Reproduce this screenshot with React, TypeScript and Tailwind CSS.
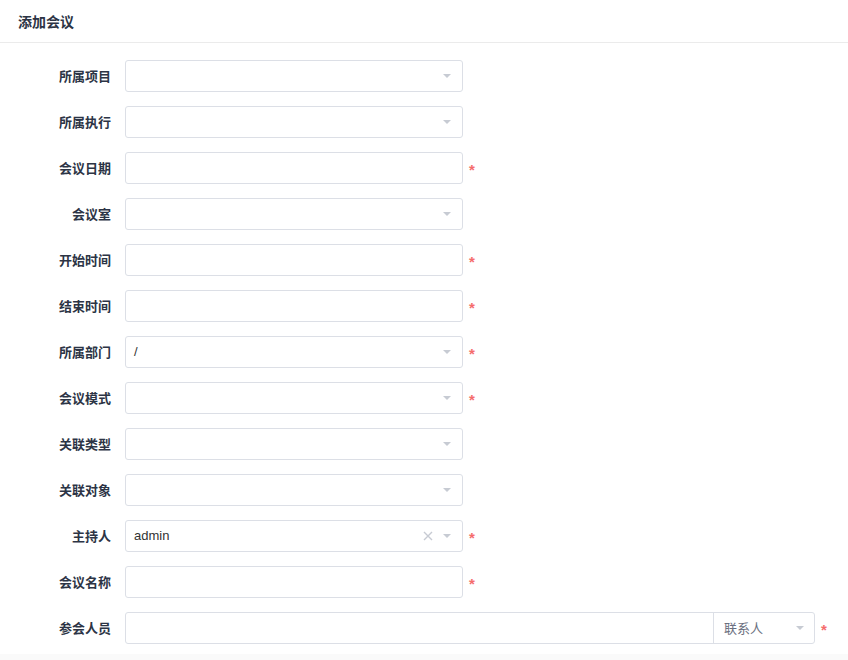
import type { ReactNode } from "react";

type Field = {
  label: string;
  kind: "select" | "input";
  value?: string;
  required?: boolean;
  clearable?: boolean;
};

const fields: Field[] = [
  { label: "所属项目", kind: "select" },
  { label: "所属执行", kind: "select" },
  { label: "会议日期", kind: "input", required: true },
  { label: "会议室", kind: "select" },
  { label: "开始时间", kind: "input", required: true },
  { label: "结束时间", kind: "input", required: true },
  { label: "所属部门", kind: "select", value: "/", required: true },
  { label: "会议模式", kind: "select", required: true },
  { label: "关联类型", kind: "select" },
  { label: "关联对象", kind: "select" },
  { label: "主持人", kind: "select", value: "admin", required: true, clearable: true },
  { label: "会议名称", kind: "input", required: true },
];

function Caret() {
  return (
    <svg width="8" height="4" viewBox="0 0 8 4" className="shrink-0">
      <path d="M0 0h8L4 4z" fill="#c7cbd3" />
    </svg>
  );
}

function ClearIcon() {
  return (
    <svg width="10" height="10" viewBox="0 0 10 10" className="shrink-0">
      <path d="M1 1l8 8M9 1l-8 8" stroke="#c7cbd3" strokeWidth="1.4" />
    </svg>
  );
}

function Star({ show }: { show?: boolean }) {
  return (
    <span
      className={`w-[16px] pl-[6px] pt-[3px] font-['Liberation_Sans',sans-serif] text-[15px] font-bold leading-none text-[#f56c6c] ${show ? "" : "invisible"}`}
    >
      *
    </span>
  );
}

function Row({ label, children }: { label: string; children: ReactNode }) {
  return (
    <div className="flex items-center">
      <label className="w-[125px] shrink-0 pr-[14px] text-right text-[13px] font-semibold text-[#2c3445]">
        {label}
      </label>
      {children}
    </div>
  );
}

export default function App() {
  return (
    <div className="flex h-[660px] w-[848px] flex-col bg-white font-['Noto_Sans_CJK_SC','Noto_Sans',sans-serif]">
      {/* Title bar */}
      <div className="flex h-[43px] shrink-0 items-center border-b border-[#ebebeb] px-[18px]">
        <h1 className="text-[14px] font-semibold text-[#2c3445]">添加会议</h1>
      </div>

      <div className="flex flex-col gap-[14px] pt-[17px]">
        {fields.map((f) => (
          <Row key={f.label} label={f.label}>
            <div className="flex h-[32px] w-[338px] items-center rounded-[3px] border border-[#dcdfe6] pl-[8px] pr-[11px] font-['Liberation_Sans','Noto_Sans_CJK_SC',sans-serif] text-[13px] text-[#333]">
              <span className="flex-1">{f.value}</span>
              {f.clearable && (
                <span className="mr-[10px] flex">
                  <ClearIcon />
                </span>
              )}
              {f.kind === "select" && <Caret />}
            </div>
            <Star show={f.required} />
          </Row>
        ))}

        {/* Attendees with contact picker addon */}
        <Row label="参会人员">
          <div className="flex h-[32px] w-[690px] rounded-[3px] border border-[#dcdfe6]">
            <div className="flex-1" />
            <div className="flex w-[101px] items-center border-l border-[#dcdfe6] pl-[10px] pr-[10px] text-[13px] text-[#6b7080]">
              <span className="flex-1">联系人</span>
              <Caret />
            </div>
          </div>
          <Star show />
        </Row>
      </div>

      <div className="mt-auto h-[6px] bg-[#fafafa]" />
    </div>
  );
}
